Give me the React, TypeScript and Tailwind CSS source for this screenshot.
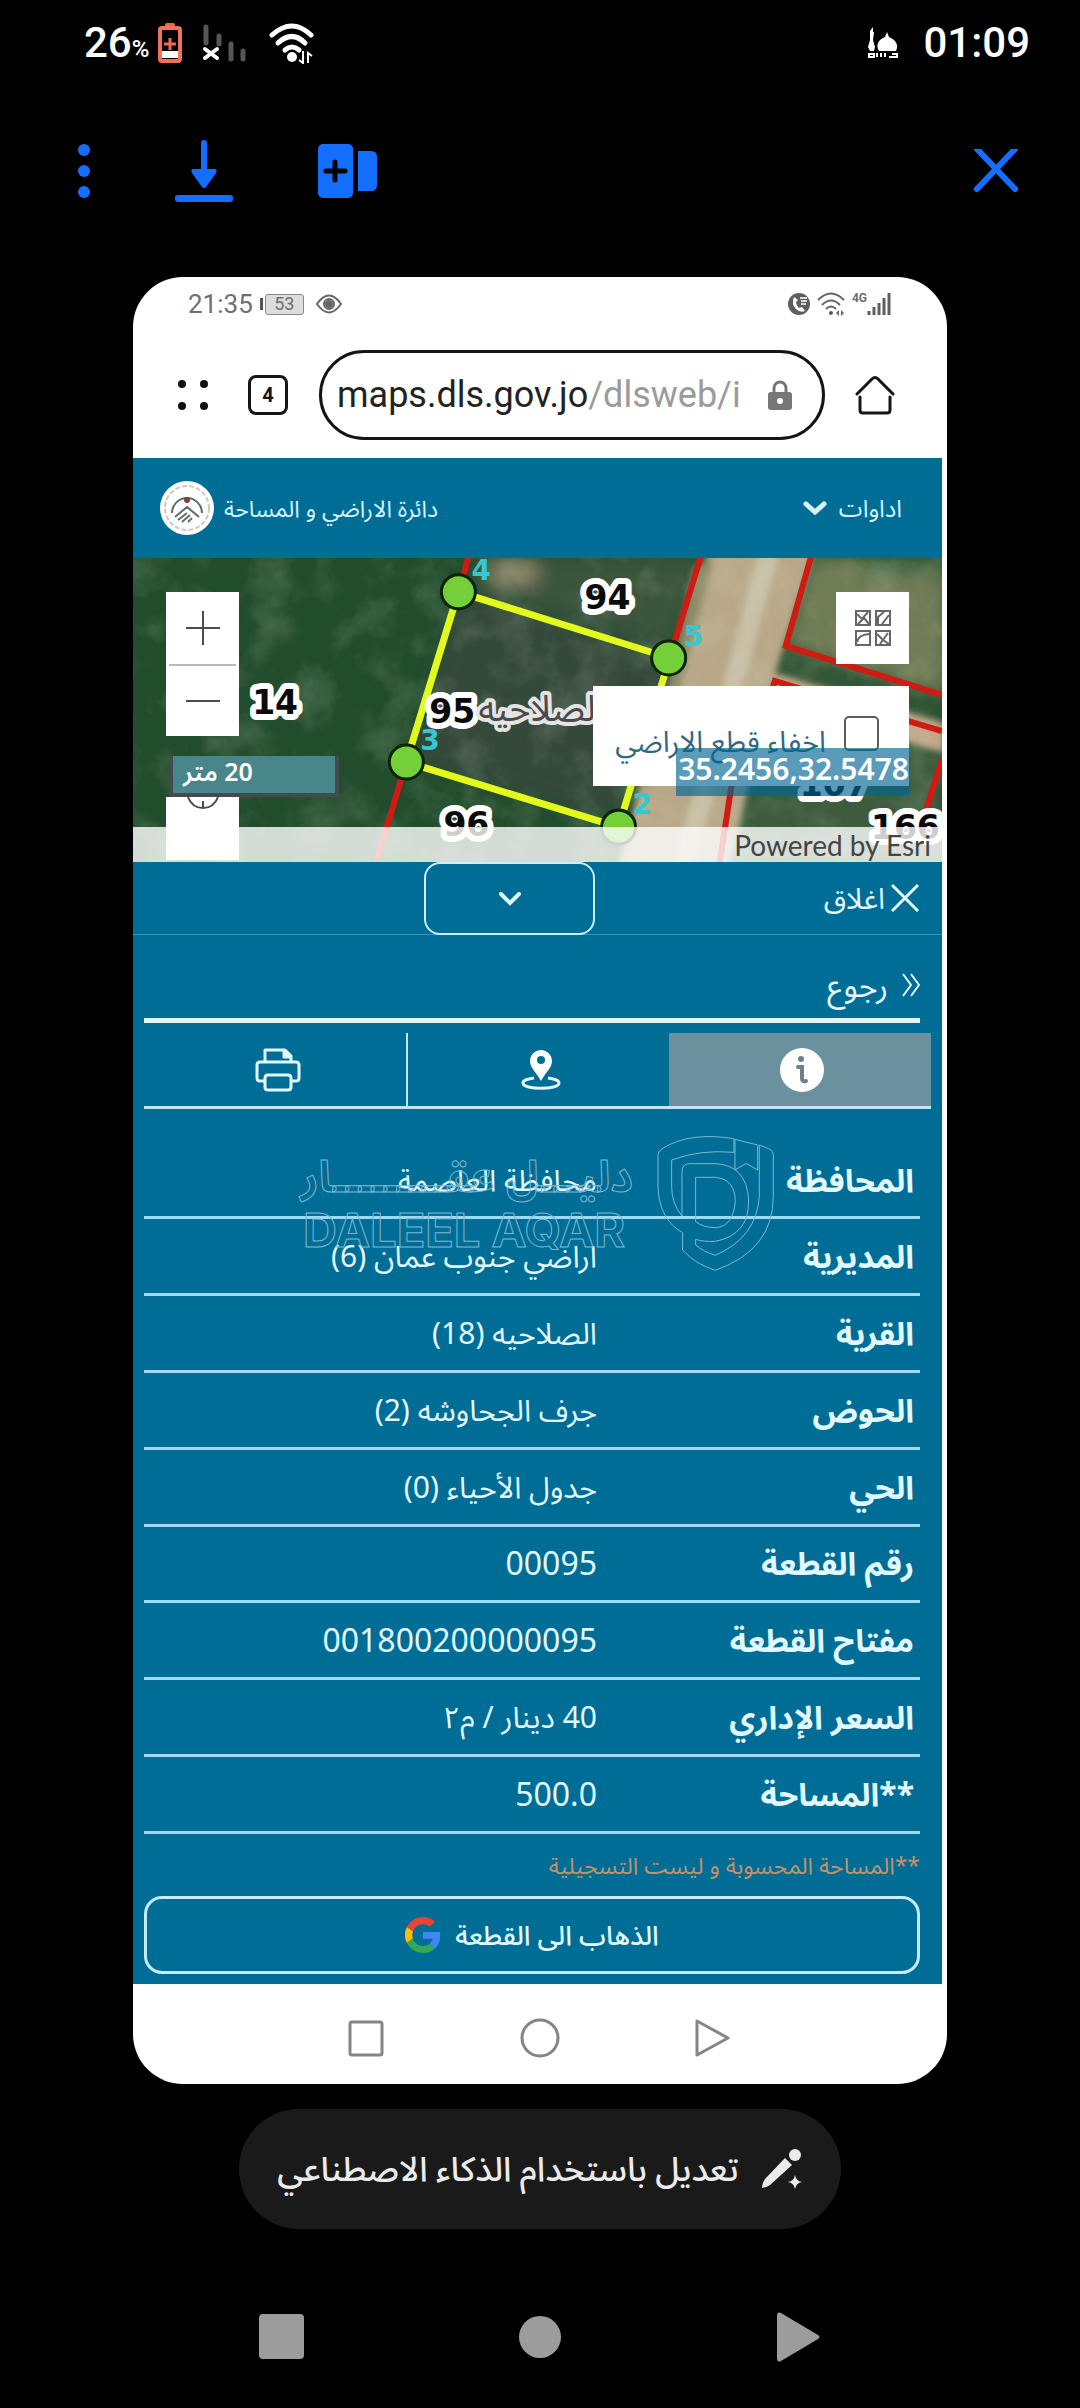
import type { ReactNode } from "react";

const rows = [
  { label: "المحافظة", value: "محافظة العاصمة" },
  { label: "المديرية", value: "اراضي جنوب عمان (6)" },
  { label: "القرية", value: "الصلاحيه (18)" },
  { label: "الحوض", value: "جرف الجحاوشه (2)" },
  { label: "الحي", value: "جدول الأحياء (0)" },
  { label: "رقم القطعة", value: "00095", numeric: true },
  { label: "مفتاح القطعة", value: "001800200000095", numeric: true },
  { label: "السعر الإداري", value: "40 دينار / م٢" },
  { label: "**المساحة", value: "500.0", numeric: true },
];

const parcels = [
  { text: "94", x: 451, y: 51 },
  { text: "14", x: 119, y: 156 },
  { text: "95", x: 296, y: 165 },
  { text: "96", x: 310, y: 278 },
  { text: "107", x: 666, y: 238 },
  { text: "166", x: 737, y: 281 },
];

const corners = [
  { text: "4", cx: 325, cy: 34, x: 338, y: 22 },
  { text: "5", cx: 535, cy: 100, x: 550, y: 88 },
  { text: "3", cx: 273, cy: 204, x: 287, y: 192 },
  { text: "2", cx: 485, cy: 269, x: 499, y: 256 },
];

function StatusBar() {
  return (
    <div className="flex h-[86px] items-center justify-between pl-[84px] pr-[50px] text-white">
      <div className="flex items-center">
        <span className="text-[42px] font-medium leading-none">
          26<span className="text-[24px]">%</span>
        </span>
        <svg className="ml-[9px] h-[40px] w-[24px]" viewBox="0 0 24 40">
          <rect x="7" y="0" width="10" height="6" rx="2" fill="#f26a4b" />
          <rect x="2" y="5" width="20" height="33" rx="2" fill="none" stroke="#f0725a" strokeWidth="4" />
          <rect x="4" y="28" width="16" height="7" fill="#fff" />
          <path d="M12 15v12M6 21h12" stroke="#f26a4b" strokeWidth="3" />
        </svg>
        <svg className="ml-[20px] h-[40px] w-[46px]" viewBox="0 0 46 40">
          <path d="M4 4v16M17 13v8M29 21v15M41 28v8" stroke="#565656" strokeWidth="5" strokeLinecap="round" />
          <path d="M3 26l12 9M15 26l-12 9" stroke="#fff" strokeWidth="4" strokeLinecap="round" />
        </svg>
        <svg className="ml-[20px] h-[42px] w-[48px]" viewBox="0 0 48 42">
          <g fill="none" stroke="#fff" strokeWidth="5" strokeLinecap="round">
            <path d="M4 13Q24 -5 43 13" />
            <path d="M10 21Q24 8 37 21" />
            <path d="M17 28Q24 22 31 28" />
          </g>
          <circle cx="24" cy="35" r="5" fill="#fff" />
          <path d="M35 29v12l-4-3M40 41V31l4 3" fill="none" stroke="#fff" strokeWidth="2" />
        </svg>
      </div>
      <div className="flex items-center gap-[24px]">
        <svg className="h-[32px] w-[32px]" viewBox="0 0 32 32" fill="#fff">
          <path d="M3 4l3-4v5h1l-1 8 2 7-1 4H3l-2-4 2-7z" />
          <path d="M20 5l2 5c7 3 10 8 7 14H12c-4-6 0-12 6-14z" />
          <path d="M2 30v-3h5v3zm8 0v-4m4 4v-4m4 4v-4m4 4h8v-3h-5" fill="none" stroke="#fff" strokeWidth="2" />
        </svg>
        <span className="text-[42px] font-medium leading-none">01:09</span>
      </div>
    </div>
  );
}

function Toolbar() {
  return (
    <div className="flex h-[170px] items-center justify-between pl-[64px] pr-[62px] text-[#146eff]">
      <div className="flex items-center">
        <button aria-label="المزيد">
          <svg className="h-[64px] w-[40px]" viewBox="0 0 40 64" fill="currentColor">
            <circle cx="20" cy="11" r="6" />
            <circle cx="20" cy="32" r="6" />
            <circle cx="20" cy="53" r="6" />
          </svg>
        </button>
        <button className="ml-[70px]" aria-label="تنزيل">
          <svg className="h-[64px] w-[60px]" viewBox="0 0 60 64" fill="currentColor">
            <rect x="27" y="1" width="6" height="34" rx="3" />
            <path d="M20 30h20q4 0 2 4L32 48q-2 2-4 0L18 34q-2-4 2-4z" />
            <rect x="1" y="56" width="58" height="7" rx="3" />
          </svg>
        </button>
        <button className="ml-[84px]" aria-label="إضافة">
          <svg className="h-[56px] w-[60px]" viewBox="0 0 60 56">
            <rect x="0" y="1" width="35" height="54" rx="5" fill="currentColor" />
            <path d="M40 8h13q6 0 6 6v28q0 6-6 6H40z" fill="currentColor" />
            <path d="M17 19v18M8 28h19" stroke="#000" strokeWidth="5" strokeLinecap="round" />
          </svg>
        </button>
      </div>
      <button aria-label="إغلاق">
        <svg className="h-[44px] w-[44px]" viewBox="0 0 44 44">
          <path d="M3 0l38 40M41 0L3 40" stroke="currentColor" strokeWidth="6" strokeLinecap="round" />
        </svg>
      </button>
    </div>
  );
}

function PhoneStatus() {
  return (
    <div className="flex h-[54px] items-center justify-between pl-[55px] pr-[55px] text-[#6f6f6f]">
      <div className="flex items-center">
        <span className="text-[26px] leading-none">21:35</span>
        <span className="ml-[7px] h-[12px] w-[3px] bg-[#555555]" />
        <span className="ml-[2px] flex h-[21px] w-[39px] items-center justify-center rounded-[3px] border border-[#8a8a8a] bg-[#dddddd] text-[18px] leading-none">
          53
        </span>
        <svg className="ml-[12px] h-[20px] w-[26px]" viewBox="0 0 26 20" fill="none" stroke="#666" strokeWidth="2">
          <path d="M1 10Q13 -7 25 10Q13 27 1 10z" />
          <circle cx="13" cy="10" r="5" />
          <circle cx="13" cy="10" r="3" fill="#666" />
        </svg>
      </div>
      <div className="flex items-center">
        <svg className="h-[24px] w-[24px]" viewBox="0 0 24 24">
          <circle cx="12" cy="12" r="11" fill="#5e5e5e" />
          <path d="M7 5q-3 7 2 12 4 4 9 2l-3-4-3 1q-3-3-3-6l2-2z" fill="#fff" />
          <path d="M13 6h7M14 9h6M14 12h5" stroke="#ddd" strokeWidth="2" />
        </svg>
        <svg className="ml-[6px] h-[24px] w-[28px]" viewBox="0 0 28 24">
          <g fill="none" stroke="#666" strokeWidth="2">
            <path d="M1 8Q14 -5 27 8" />
            <path d="M5 13Q14 4 23 13" />
            <path d="M9 17Q14 12 19 17" />
          </g>
          <circle cx="14" cy="21" r="2" fill="#555" />
          <path d="M22 18v6l-3-3zM24 18v6l3-3z" fill="#666" />
        </svg>
        <span className="mb-[12px] ml-[7px] text-[12px] font-bold leading-none">4G</span>
        <svg className="h-[24px] w-[25px]" viewBox="0 0 25 24">
          <path d="M2 23v-4M7 23v-8M12 23V11M17 23V6M22 23V1" stroke="#5e5e5e" strokeWidth="3" />
        </svg>
      </div>
    </div>
  );
}

function AddressBar() {
  return (
    <div className="flex h-[127px] items-center pl-[44px] pr-[52px]">
      <button aria-label="القائمة">
        <svg className="h-[32px] w-[32px]" viewBox="0 0 32 32" fill="#111">
          <circle cx="5" cy="5" r="4" />
          <circle cx="27" cy="5" r="4" />
          <circle cx="5" cy="27" r="4" />
          <circle cx="27" cy="27" r="4" />
        </svg>
      </button>
      <button className="ml-[39px] flex h-[40px] w-[40px] items-center justify-center rounded-[8px] border-3 border-[#151515] text-[20px] font-bold leading-none text-[#151515]">
        4
      </button>
      <div className="ml-[31px] flex h-[90px] min-w-0 flex-1 items-center justify-between rounded-full border-3 border-[#151515] pl-[15px] pr-[30px]">
        <a href="#" className="whitespace-nowrap text-[36px] leading-none text-[#222222]">
          maps.dls.gov.jo<span className="text-[#9b9b9b]">/dlsweb/i</span>
        </a>
        <svg className="h-[30px] w-[24px] shrink-0" viewBox="0 0 24 30">
          <path d="M6 14V8a6 6 0 0 1 12 0v6" fill="none" stroke="#777" strokeWidth="3" />
          <rect x="0" y="12" width="24" height="18" rx="3" fill="#777" />
          <circle cx="12" cy="21" r="3" fill="#fff" />
        </svg>
      </div>
      <button className="ml-[30px]" aria-label="الرئيسية">
        <svg className="h-[40px] w-[40px]" viewBox="0 0 40 40" fill="none" stroke="#151515" strokeWidth="3" strokeLinecap="round" strokeLinejoin="round">
          <path d="M2 19L17 4q3-3 6 0l15 15" />
          <path d="M5 22v13q0 3 3 3h24q3 0 3-3V22" />
        </svg>
      </button>
    </div>
  );
}

function SiteHeader() {
  return (
    <header className="flex h-[100px] items-center justify-between bg-[#006d96] pl-[26px] pr-[40px] text-[24px] text-[#d5f4ff]">
      <div className="flex items-center gap-[9px]">
        <svg className="h-[56px] w-[56px]" viewBox="0 0 56 56">
          <circle cx="28" cy="28" r="27" fill="#fff" />
          <circle cx="28" cy="28" r="22" fill="none" stroke="#cfc8c5" strokeWidth="2" strokeDasharray="5 2" />
          <g fill="none" stroke="#5b6e68" strokeWidth="2">
            <path d="M13 33a15 15 0 1 1 30 0" />
            <path d="M16 37l12-10 12 10M19 40l9-7M23 42l8-7M29 42l4-4" />
          </g>
          <circle cx="28" cy="20" r="3" fill="#8b3b3b" />
        </svg>
        <span dir="rtl" className="text-[23px]">دائرة الاراضي و المساحة</span>
      </div>
      <button dir="rtl" className="flex items-center gap-[12px]">
        اداوات
        <svg className="h-[14px] w-[24px]" viewBox="0 0 24 14">
          <path d="M3 3l9 8 9-8" fill="none" stroke="#d5f4ff" strokeWidth="5" strokeLinecap="round" />
        </svg>
      </button>
    </header>
  );
}

function MapCanvas() {
  return (
    <svg className="absolute inset-0 h-full w-full" viewBox="0 0 808 304" preserveAspectRatio="xMidYMid slice">
      <defs>
        <filter id="soft" x="-20%" y="-20%" width="140%" height="140%">
          <feGaussianBlur stdDeviation="9" />
        </filter>
        <filter id="edge" x="-20%" y="-20%" width="140%" height="140%">
          <feGaussianBlur stdDeviation="3" />
        </filter>
        <filter id="grain">
          <feTurbulence type="fractalNoise" baseFrequency="0.025" numOctaves="4" seed="4" />
          <feColorMatrix values="0 0 0 0 0.7  0 0 0 0 0.75  0 0 0 0 0.6  1.6 0 0 0 -0.7" />
        </filter>
      </defs>
      <rect width="808" height="304" fill="#224d2d" />
      <g filter="url(#soft)">
        <path d="M330 30L540 100L480 260L275 205Z" fill="#35493a" />
        <path d="M345 0h230l-40 90-190-60z" fill="#3a553c" />
        <path d="M675 0h140v140L650 90z" fill="#6f7b55" />
        <path d="M640 100l168 60v144H600z" fill="#3c5c3c" />
        <path d="M355 5h50v20h-50z" fill="#8d8468" />
        <path d="M730 0h80v20h-80z" fill="#486b47" />
      </g>
      <g filter="url(#edge)">
        <path d="M574 -5H680L640 120L596 310H484L530 140Z" fill="#b8a888" />
        <path d="M625 -5h20L560 310h-20z" fill="#c9c0a6" />
        <path d="M560 10l20-12-50 200-20 40z" fill="#8d8c69" />
        <path d="M640 115L810 165V195L640 145Z" fill="#c0a98a" />
      </g>
      <rect width="808" height="304" filter="url(#grain)" opacity="0.25" />
      <path
        d="M325 34L336 -4M273 204L243 304M536 100L568 -4M678 -4L652 88L808 137M636 140L641 123L808 173M808 202L792 252M606 174L586 304"
        fill="none"
        stroke="#d11a12"
        strokeWidth="6"
      />
      <path d="M325 34L536 100L485 269L273 204Z" fill="none" stroke="#e3fb1c" strokeWidth="7" />
      {corners.map((c) => (
        <g key={c.text}>
          <circle cx={c.cx} cy={c.cy} r="17" fill="#74cf38" stroke="#0c2408" strokeWidth="3" />
          <text x={c.x} y={c.y} className="fill-[#35c8d2] font-['DejaVu_Sans'] text-[28px] font-bold">
            {c.text}
          </text>
        </g>
      ))}
      <g strokeLinejoin="round" className="font-['DejaVu_Sans'] font-bold [paint-order:stroke]" stroke="#fff" strokeWidth="12">
        {parcels.map((p) => (
          <text key={p.text} x={p.x} y={p.y} fill="#0a0a0a" className="text-[33px]">
            {p.text}
          </text>
        ))}
      </g>
      <text
        x="345"
        y="163"
        direction="rtl"
        textAnchor="end"
        fill="#4a4a4a"
        stroke="#e4e4e4"
        strokeWidth="8"
        strokeLinejoin="round"
        className="text-[36px] [paint-order:stroke]"
      >
        الصلاحيه
      </text>
    </svg>
  );
}

function MapView() {
  return (
    <section className="relative h-[304px] overflow-hidden">
      <MapCanvas />

      {/* Zoom controls */}
      <div className="absolute left-[33px] top-[34px] flex w-[73px] flex-col bg-white">
        <button className="flex h-[72px] items-center justify-center" aria-label="تكبير">
          <svg className="h-[34px] w-[34px]" viewBox="0 0 34 34">
            <path d="M17 0v34M0 17h34" stroke="#4c4c4c" strokeWidth="2" />
          </svg>
        </button>
        <span className="mx-[3px] h-[2px] bg-[#b9b9b9]" />
        <button className="flex h-[70px] items-center justify-center" aria-label="تصغير">
          <svg className="h-[34px] w-[34px]" viewBox="0 0 34 34">
            <path d="M0 17h34" stroke="#4c4c4c" strokeWidth="2" />
          </svg>
        </button>
      </div>

      {/* Locate, half hidden by the scale bar */}
      <button className="absolute left-[33px] top-[239px] flex h-[63px] w-[73px] justify-center bg-white" aria-label="موقعي">
        <svg className="h-[14px] w-[36px]" viewBox="0 0 36 14">
          <path d="M3 0q4 11 15 11T33 0M18 4v7" fill="none" stroke="#4c4c4c" strokeWidth="2" />
        </svg>
      </button>
      <div dir="rtl" className="absolute left-[36px] top-[198px] flex h-[41px] w-[170px] items-center justify-end border-x-4 border-b-4 border-[#444b50] bg-[#49868b] pb-[6px] pl-[10px] text-[25px] font-semibold leading-none text-white">
        20 متر
      </div>

      {/* Basemap gallery */}
      <button className="absolute right-[33px] top-[34px] flex h-[72px] w-[73px] items-center justify-center bg-white" aria-label="خريطة الأساس">
        <svg className="h-[38px] w-[38px]" viewBox="0 0 38 38" fill="none" stroke="#666" strokeWidth="2">
          <path d="M2 2h14v14H2zM22 2h14v14H22zM2 22h14v14H2zM22 22h14v14H22z" />
          <path d="M3 5l5 5 6-7M4 15l6-6 5 6M24 15V8l6-5M28 15l7-9M3 33q1-7 12-8M23 25l6 6 6 4M26 35l8-11" />
        </svg>
      </button>

      <label dir="rtl" className="absolute right-[33px] top-[128px] flex h-[100px] w-[316px] items-center bg-white pr-[30px] text-[29px] text-[#33697f]">
        <input type="checkbox" className="mb-[6px] h-[35px] w-[35px] appearance-none rounded-[5px] border-2 border-[#5c5c5c] bg-white" />
        <span className="mr-[18px] mt-[10px] whitespace-nowrap">اخفاء قطع الاراضي</span>
      </label>
      <div className="absolute right-[33px] top-[190px] flex h-[48px] items-center bg-[#006594]/65 pb-[6px] pl-[2px] text-[30px] font-semibold leading-none text-white">
        35.2456,32.5478
      </div>

      <div className="absolute inset-x-0 bottom-0 flex h-[35px] items-center justify-end bg-white/80 pr-[11px] font-[Lato] text-[28px] leading-none text-[#444444]">
        Powered by Esri
      </div>
    </section>
  );
}

function Tab({ active, label, children }: { active?: boolean; label: string; children: ReactNode }) {
  return (
    <button
      aria-label={label}
      className={active ? "flex items-center justify-center bg-[#6b919e] pl-[5px]" : "flex items-center justify-center pl-[5px]"}
    >
      {children}
    </button>
  );
}

function Watermark() {
  return (
    <svg className="pointer-events-none absolute left-[157px] top-[-24px] h-[170px] w-[500px]" viewBox="0 0 500 170" fill="none" stroke="#7db8d2" strokeWidth="1">
      <text x="343" y="72" direction="rtl" textAnchor="start" className="text-[44px] font-bold">
        دليـــل عقـــــــــار
      </text>
      <text x="13" y="127" className="font-[Inter] text-[47px] font-bold">
        DALEEL AQAR
      </text>
      <g transform="scale(0.3333)" strokeWidth="3">
        <path d="M1332 97V56Q1200 35 1120 84Q1104 92 1104 105V200Q1108 300 1178 338V390Q1215 432 1276 451Q1450 390 1450 230V105Q1450 92 1436 86L1408 75V230Q1400 352 1276 406Q1240 395 1217 375V358Q1240 366 1276 364Q1378 345 1376 240Q1370 135 1276 131H1200Q1176 131 1176 155V288Q1145 250 1145 200V120Q1230 88 1332 97" />
        <path d="M1217 172H1276Q1336 178 1336 245Q1330 320 1276 323Q1240 323 1217 305Z" />
        <path d="M1335 58L1403 75V150L1369 130L1335 150Z" />
      </g>
    </svg>
  );
}

function DetailsPanel() {
  return (
    <section className="bg-[#006d96] text-[#e2f8ff]">
      <div className="flex h-[73px] items-center justify-between border-b border-[#3d93b5] pl-[291px] pr-[23px]">
        <button className="-mb-px flex h-[73px] w-[171px] items-center justify-center rounded-[16px] border-2 border-[#c9efff]" aria-label="طي">
          <svg className="h-[14px] w-[22px]" viewBox="0 0 22 14">
            <path d="M2 2l9 9 9-9" fill="none" stroke="#e2f8ff" strokeWidth="4" strokeLinecap="round" />
          </svg>
        </button>
        <button dir="rtl" className="flex items-center gap-[6px] text-[29px]">
          <svg className="h-[28px] w-[28px]" viewBox="0 0 28 28">
            <path d="M1 1l26 26M27 1L1 27" stroke="#e2f8ff" strokeWidth="3" />
          </svg>
          اغلاق
        </button>
      </div>

      <div className="pl-[11px] pr-[22px]">
        <div className="flex h-[88px] justify-end border-b-[5px] border-[#dff6ff] pt-[16px]">
          <button dir="rtl" className="flex items-center gap-[14px] text-[32px]">
            <svg className="h-[26px] w-[18px]" viewBox="0 0 18 26">
              <path d="M1 2l8 11-8 11M9 2l8 11-8 11" fill="none" stroke="#e2f8ff" strokeWidth="2" />
            </svg>
            رجوع
          </button>
        </div>
      </div>

      <div className="pl-[11px] pr-[11px] pt-[10px]">
        <div className="grid h-[76px] grid-cols-3 border-b-3 border-[#bfe6f7]">
          <Tab label="طباعة">
            <svg className="h-[44px] w-[46px]" viewBox="0 0 46 44" fill="none" stroke="#e2f8ff" strokeWidth="3" strokeLinejoin="round">
              <path d="M10 14V2h20l6 6v6" />
              <path d="M29 2v7h7" fill="#e2f8ff" />
              <path d="M10 33H5q-3 0-3-3V17q0-3 3-3h36q3 0 3 3v13q0 3-3 3h-5" />
              <path d="M13 27h20q3 0 3 3v9q0 3-3 3H13q-3 0-3-3v-9q0-3 3-3z" />
            </svg>
          </Tab>
          <div className="grid border-l-2 border-[#bfe6f7]">
            <Tab label="الموقع">
              <svg className="h-[40px] w-[40px]" viewBox="0 0 40 40">
                <path d="M20 0c6 0 11 5 11 11 0 7-7 12-11 20C16 23 9 18 9 11 9 5 14 0 20 0z" fill="#fff" />
                <circle cx="20" cy="10" r="4" fill="#006d96" />
                <path d="M13 28c-6 1-11 2-11 5 0 7 36 7 36 0 0-3-5-4-11-5" fill="none" stroke="#e2f8ff" strokeWidth="3" />
              </svg>
            </Tab>
          </div>
          <Tab active label="معلومات">
            <svg className="h-[44px] w-[44px]" viewBox="0 0 44 44">
              <circle cx="22" cy="22" r="22" fill="#fff" />
              <circle cx="21" cy="11" r="3" fill="#6d7f88" />
              <path d="M18 19h4v12q0 3 4 2" fill="none" stroke="#6d7f88" strokeWidth="4" strokeLinecap="round" />
            </svg>
          </Tab>
        </div>
      </div>

      <div className="relative mt-[35px] pl-[11px] pr-[22px]">
        <table dir="rtl" className="h-[690px] w-full table-fixed border-collapse">
          <tbody>
            {rows.map((row) => (
              <tr key={row.label} className="border-b-3 border-[#9fd9f3]">
                <th scope="row" className="w-[323px] p-0 pr-[6px] text-right text-[32px] font-bold leading-none">
                  {row.label}
                </th>
                <td className={row.numeric ? "p-0 text-right text-[32px] leading-none" : "p-0 text-right text-[30px] leading-none"}>
                  {row.value}
                </td>
              </tr>
            ))}
          </tbody>
        </table>
        <Watermark />
      </div>

      <div dir="rtl" className="pb-[10px] pl-[11px] pr-[22px]">
        <p className="flex h-[62px] items-center text-[23px] text-[#c4916a]">**المساحة المحسوبة و ليست التسجيلية</p>
        <button className="flex h-[78px] w-full items-center justify-center gap-[14px] rounded-[18px] border-3 border-[#c4ecfb] text-[27px] font-medium">
          الذهاب الى القطعة
          <svg className="h-[36px] w-[36px]" viewBox="0 0 48 48">
            <path fill="#EA4335" d="M24 9.500c3.500 0 6.700 1.200 9.200 3.600l6.900-6.900C35.900 2.400 30.500 0 24 0 14.600 0 6.500 5.400 2.600 13.200l8 6.200C12.400 13.700 17.700 9.500 24 9.500z" />
            <path fill="#4285F4" d="M47 24.600c0-1.600-.2-3.100-.4-4.600H24v9h12.900c-.6 3-2.300 5.500-4.800 7.200l7.700 6C44.400 38 47 31.800 47 24.600z" />
            <path fill="#FBBC05" d="M10.500 28.600a14.500 14.500 0 0 1 0-9.200l-8-6.200a24 24 0 0 0 0 21.600z" />
            <path fill="#34A853" d="M24 48c6.500 0 11.900-2.100 15.900-5.800l-7.700-6c-2.200 1.500-4.900 2.300-8.200 2.300-6.300 0-11.600-4.200-13.500-9.900l-8 6.200C6.500 42.600 14.600 48 24 48z" />
          </svg>
        </button>
      </div>
    </section>
  );
}

function PhoneNav() {
  return (
    <nav className="flex h-[100px] items-center justify-center gap-[134px] pt-[8px]">
      <button aria-label="التطبيقات الأخيرة">
        <svg className="h-[40px] w-[40px]" viewBox="0 0 40 40" fill="none" stroke="#858585" strokeWidth="3">
          <rect x="4" y="4" width="32" height="33" rx="2" />
        </svg>
      </button>
      <button aria-label="الشاشة الرئيسية">
        <svg className="h-[40px] w-[40px]" viewBox="0 0 40 40" fill="none" stroke="#858585" strokeWidth="3">
          <circle cx="20" cy="20" r="18" />
        </svg>
      </button>
      <button aria-label="رجوع">
        <svg className="h-[40px] w-[40px]" viewBox="0 0 40 40" fill="none" stroke="#858585" strokeWidth="3" strokeLinejoin="round">
          <path d="M3 3v34l31-17z" />
        </svg>
      </button>
    </nav>
  );
}

export default function App() {
  return (
    <div className="flex min-h-screen flex-col bg-black font-[Roboto,'Noto_Sans_Arabic','DejaVu_Sans',sans-serif]">
      <StatusBar />
      <Toolbar />

      <main className="mx-[133px] mt-[21px] overflow-hidden rounded-[50px] bg-white">
        <PhoneStatus />
        <AddressBar />
        <div className="mr-[5px] font-['Noto_Sans','Noto_Sans_Arabic','DejaVu_Sans',sans-serif]">
          <SiteHeader />
          <MapView />
          <DetailsPanel />
        </div>
        <PhoneNav />
      </main>

      <div className="mt-[25px] flex justify-center">
        <button dir="rtl" className="flex h-[120px] items-center gap-[22px] rounded-full bg-[#1a1a1a] px-[38px] text-[34px] font-medium text-[#ebebeb]">
          <svg className="h-[40px] w-[42px]" viewBox="0 0 42 40" fill="#ebebeb">
            <path d="M24 9l7 7L9 36q-4 3-8 3 0-5 3-9z" />
            <circle cx="34" cy="6" r="6" />
            <path d="M34 26q1 6 7 7-6 1-7 7-1-6-7-7 6-1 7-7z" />
          </svg>
          تعديل باستخدام الذكاء الاصطناعي
        </button>
      </div>

      <nav className="mt-[79px] flex justify-center gap-[211px]">
        <button aria-label="التطبيقات الأخيرة">
          <svg className="h-[56px] w-[48px]" viewBox="0 0 48 56" fill="#9c9c9c">
            <rect x="2" y="6" width="45" height="45" rx="4" />
          </svg>
        </button>
        <button aria-label="الشاشة الرئيسية">
          <svg className="h-[56px] w-[48px]" viewBox="0 0 48 56" fill="#9c9c9c">
            <circle cx="24" cy="29" r="21" />
          </svg>
        </button>
        <button aria-label="رجوع">
          <svg className="h-[56px] w-[48px]" viewBox="0 0 48 56" fill="#9c9c9c">
            <path d="M2 8q0-5 4-3l37 22q3 2 0 4L6 53q-4 2-4-3z" />
          </svg>
        </button>
      </nav>
    </div>
  );
}
